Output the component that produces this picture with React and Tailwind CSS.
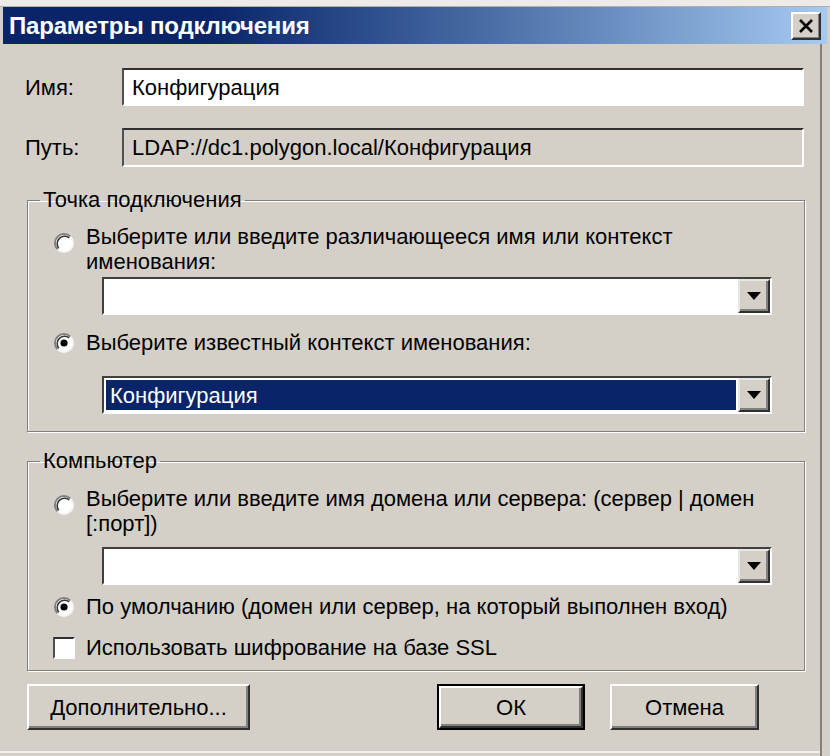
import React from "react";

function Radio({ checked }) {
  return (
    <svg width="22" height="22" viewBox="0 0 22 22" className="shrink-0">
      <circle cx="11" cy="11" r="9" fill="#fff" />
      <path d="M4.6 17.4 A9 9 0 0 1 17.4 4.6" stroke="#808080" strokeWidth="2" fill="none" />
      <path d="M5.8 16.2 A7.4 7.4 0 0 1 16.2 5.8" stroke="#303030" strokeWidth="1.5" fill="none" />
      <path d="M17.4 4.6 A9 9 0 0 1 4.6 17.4" stroke="#f4f4f4" strokeWidth="2" fill="none" />
      {checked && <circle cx="11" cy="11" r="3.6" fill="#000" />}
    </svg>
  );
}

function Combo({ value, selected }) {
  return (
    <div className="flex h-[38px] w-[670px] border-2 border-t-[#404040] border-l-[#404040] border-b-white border-r-white bg-white">
      <div className="flex flex-1 items-center p-[2px]">
        <div
          className={
            selected
              ? "flex h-full w-full items-center bg-[#0a246a] pl-[4px] text-white"
              : "h-full w-full"
          }
        >
          {value}
        </div>
      </div>
      <div className="flex w-[32px] items-center justify-center border-2 border-t-[#e8e6e0] border-l-[#e8e6e0] border-b-[#303030] border-r-[#303030] bg-[#d4d0c8] shadow-[inset_-2px_-2px_0_#808080]">
        <svg width="14" height="8" viewBox="0 0 14 8">
          <path d="M0 0 H14 L7 8 Z" fill="#000" />
        </svg>
      </div>
    </div>
  );
}

function Button({ children, width, isDefault }) {
  const inner = (
    <div className="flex h-full w-full items-center justify-center border-2 border-t-white border-l-white border-b-[#303030] border-r-[#303030] bg-[#d4d0c8] shadow-[inset_-2px_-2px_0_#808080]">
      {children}
    </div>
  );
  return isDefault ? (
    <div className={`h-[46px] border-2 border-black ${width}`}>{inner}</div>
  ) : (
    <div className={`h-[46px] ${width}`}>{inner}</div>
  );
}

function Group({ title, className, children }) {
  return (
    <fieldset
      className={`ml-[27px] w-[778px] border border-[#808080] shadow-[inset_1px_1px_0_#fff,1px_1px_0_#fff] ${className}`}
    >
      <legend className="ml-[12px] px-[3px] leading-[24px]">{title}</legend>
      <div className="pl-[25px]">{children}</div>
    </fieldset>
  );
}

export default function App() {
  return (
    <div className="flex h-[756px] w-[830px] flex-col overflow-hidden bg-[#d4d0c8] font-['Liberation_Sans',Arial,sans-serif] text-[22px] text-black">
      {/* strip of the window behind */}
      <div className="h-[7px] border-b border-[#b0b0b0] bg-[#ecebe8]" />

      {/* title bar */}
      <div className="mx-[3px] flex h-[37px] items-center justify-between bg-gradient-to-r from-[#0a246a] from-25% to-[#a6caf0] pl-[6px] pr-[6px]">
        <span className="text-[24px] font-bold tracking-[-0.2px] text-white">Параметры подключения</span>
        <div className="flex h-[28px] w-[30px] items-center justify-center border-2 border-t-white border-l-white border-b-[#303030] border-r-[#303030] bg-[#d4d0c8] shadow-[inset_-1px_-1px_0_#808080]">
          <svg width="16" height="14" viewBox="0 0 16 14">
            <path d="M2 1 L14 13 M14 1 L2 13" stroke="#000" strokeWidth="2.6" />
          </svg>
        </div>
      </div>

      <div className="mr-[8px] flex flex-1 flex-col border-r-2 border-[#808080]">
        {/* name */}
        <div className="mt-[24px] flex items-center">
          <span className="w-[122px] pl-[25px]">Имя:</span>
          <div className="flex h-[38px] w-[682px] items-center border-2 border-t-[#303030] border-l-[#505050] border-b-white border-r-white bg-white pl-[8px]">
            Конфигурация
          </div>
        </div>

        {/* path */}
        <div className="mt-[22px] flex items-center">
          <span className="w-[122px] pl-[25px]">Путь:</span>
          <div className="flex h-[39px] w-[682px] items-center border-2 border-t-[#303030] border-l-[#505050] border-b-white border-r-white bg-[#d4d0c8] pl-[8px]">
            LDAP://dc1.polygon.local/Конфигурация
          </div>
        </div>

        {/* connection point */}
        <Group title="Точка подключения" className="mt-[21px] h-[244px]">
          <div className="mt-[12px] flex items-start">
            <div className="mt-[8px] w-[33px]">
              <Radio />
            </div>
            <div className="leading-[25px]">
              Выберите или введите различающееся имя или контекст
              <br />
              именования:
            </div>
          </div>
          <div className="ml-[49px] mt-[3px]">
            <Combo />
          </div>
          <div className="mt-[15px] flex items-center">
            <div className="w-[33px]">
              <Radio checked />
            </div>
            <span className="leading-[25px]">Выберите известный контекст именования:</span>
          </div>
          <div className="ml-[49px] mt-[21px]">
            <Combo value="Конфигурация" selected />
          </div>
        </Group>

        {/* computer */}
        <Group title="Компьютер" className="mt-[17px] h-[222px]">
          <div className="mt-[13px] flex items-start">
            <div className="mt-[8px] w-[33px]">
              <Radio />
            </div>
            <div className="leading-[25px]">
              Выберите или введите имя домена или сервера: (сервер | домен
              <br />
              [:порт])
            </div>
          </div>
          <div className="ml-[49px] mt-[11px]">
            <Combo />
          </div>
          <div className="mt-[9px] flex items-center">
            <div className="w-[33px]">
              <Radio checked />
            </div>
            <span className="leading-[25px]">По умолчанию (домен или сервер, на который выполнен вход)</span>
          </div>
          <div className="mt-[16px] flex items-center">
            <div className="w-[33px]">
              <div className="h-[22px] w-[22px] border-2 border-t-[#303030] border-l-[#505050] border-b-white border-r-white bg-white" />
            </div>
            <span className="leading-[25px]">Использовать шифрование на базе SSL</span>
          </div>
        </Group>

        {/* buttons */}
        <div className="mt-[13px] flex items-center">
          <div className="ml-[27px]">
            <Button width="w-[223px]">Дополнительно...</Button>
          </div>
          <div className="ml-[187px]">
            <Button width="w-[148px]" isDefault>
              ОК
            </Button>
          </div>
          <div className="ml-[25px]">
            <Button width="w-[149px]">Отмена</Button>
          </div>
        </div>
        <div className="mt-[21px] border-t-2 border-[#f0efec]" />
      </div>
    </div>
  );
}
